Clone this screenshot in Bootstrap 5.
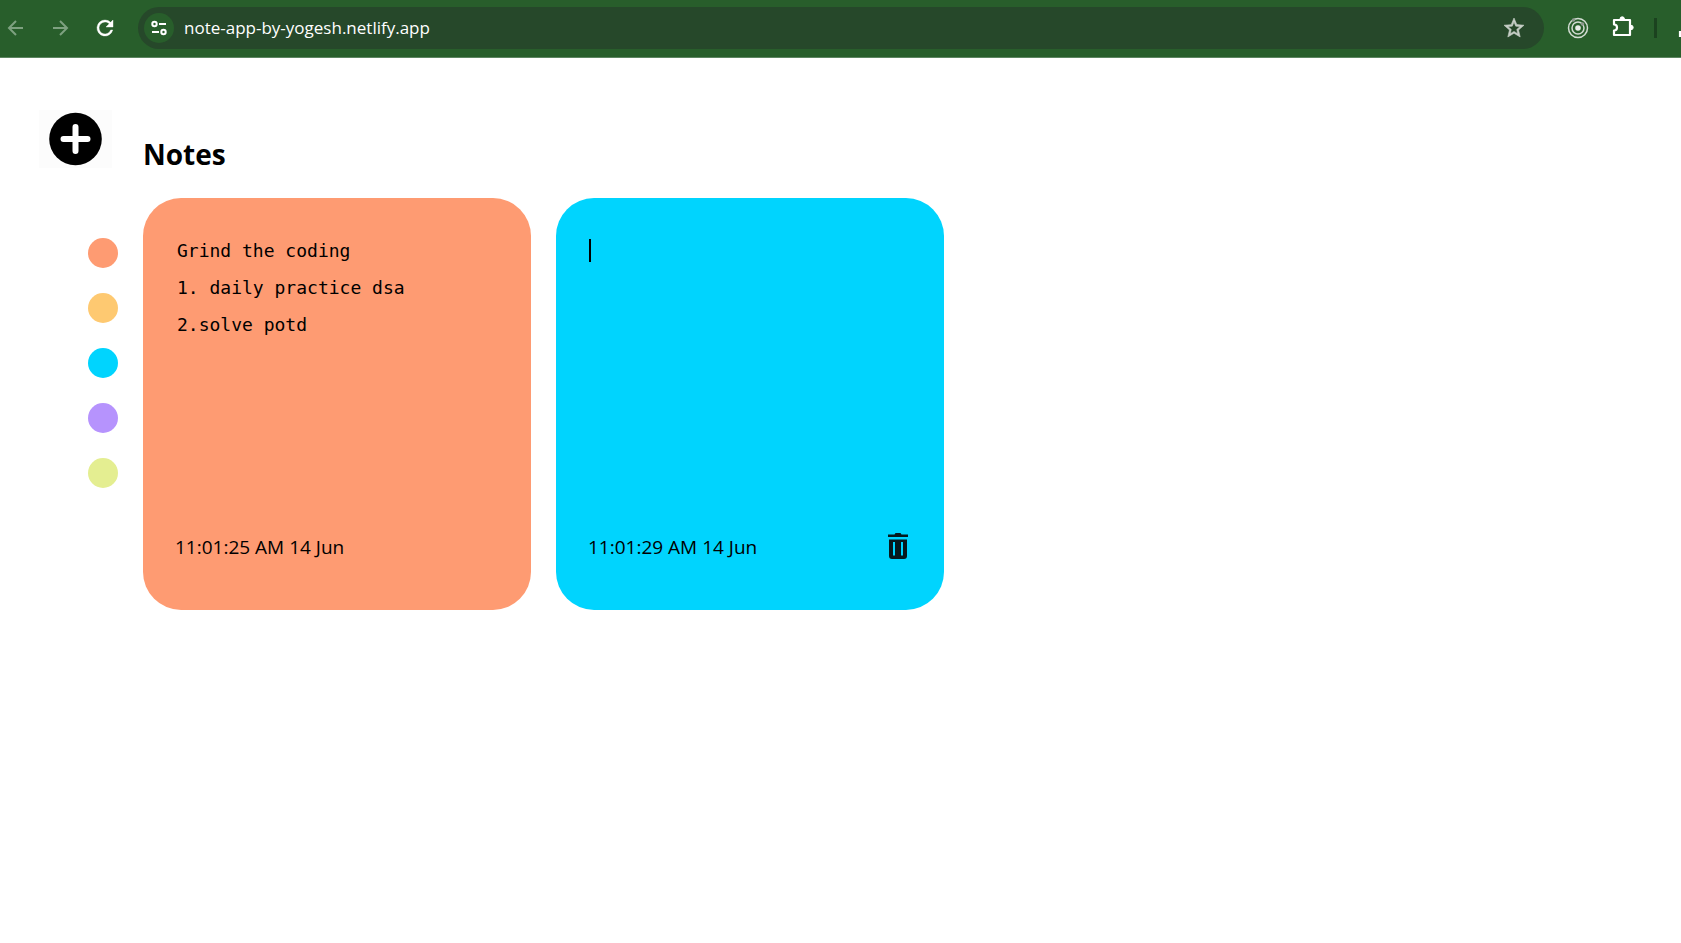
<!DOCTYPE html>
<html lang="en">
<head>
<meta charset="utf-8">
<meta name="viewport" content="width=device-width, initial-scale=1">
<title>Notes</title>
<link href="https://cdn.jsdelivr.net/npm/bootstrap@5.3.0/dist/css/bootstrap.min.css" rel="stylesheet">
<style>
  body { font-family: "Open Sans", "Noto Sans", sans-serif; color: #000; overflow-x: hidden; }
  svg { display: block; flex: none; }

  /* Browser toolbar */
  .toolbar { height: 58px; padding-bottom: 1px; background: #285e2b; border-bottom: 1px solid #5c8560; overflow: hidden; }
  .tool-btn { padding: 0; border: 0; background: none; color: #fff; flex: none; }
  .tool-btn:disabled { color: #7ea180; }
  .nav-tools { gap: 21px; padding-left: 3px; width: 138px; flex: none; }
  .address { height: 42px; background: #26482a; border-radius: 21px; padding-left: 6px; padding-right: 18px; }
  .site-info { width: 30px; height: 30px; background: #285e2b; }
  .url { font-size: 17px; line-height: 24px; color: #fff; background: none; border: 0; outline: 0; padding: 0; margin-left: 10px; min-width: 0; }
  .right-tools { padding-left: 22px; width: 137px; gap: 20px; flex: none; }
  .divider { width: 3px; height: 20px; background: #1b421f; flex: none; }

  /* Notes page */
  .rail { width: 118px; flex: none; padding-top: 52px; }
  .add-btn { width: 73px; height: 58px; border: 0; padding: 0; background: #fcfcfc; margin-right: 6px; }
  .swatches { gap: 25px; margin-top: 70px; }
  .swatch { width: 30px; height: 30px; border: 0; border-radius: 50%; padding: 0; }
  .board { padding: 76px 24px 48px 25px; }
  .board-title { font-size: 28px; line-height: 40px; margin-bottom: 24px; font-weight: 700; }
  .note-grid { gap: 25px; }
  .note { width: 388px; height: 412px; border-radius: 38px; padding: 32px 32px 44px; position: relative; }
  .note-text { border: 0; outline: 0; resize: none; background: none; padding: 2px; font-family: "DejaVu Sans Mono", monospace; font-size: 18px; line-height: 37px; color: #000; caret-color: transparent; overflow: hidden; }
  .note-date { font-size: 19px; line-height: 38px; }
  .caret { position: absolute; left: 33px; top: 41px; width: 2px; height: 23px; background: #000; }
  .trash { border: 0; background: none; padding: 0; margin-right: 4px; }
  .orange { background: #fe9b72; }
  .yellow { background: #fec971; }
  .cyan { background: #00d4fe; }
  .purple { background: #b693fd; }
  .lime { background: #e4ee91; }
</style>
</head>
<body class="bg-white">
<header class="toolbar d-flex align-items-center">
  <div class="nav-tools d-flex align-items-center">
    <button class="tool-btn" disabled aria-label="Back"><svg width="24" height="24" viewBox="0 0 24 24" fill="none" stroke="currentColor" stroke-width="2"><path d="M20 12H6M13 5l-7 7 7 7"/></svg></button>
    <button class="tool-btn" disabled aria-label="Forward"><svg width="24" height="24" viewBox="0 0 24 24" fill="none" stroke="currentColor" stroke-width="2"><path d="M5 12h14M12 5l7 7-7 7"/></svg></button>
    <button class="tool-btn" aria-label="Reload"><svg width="24" height="24" viewBox="0 0 24 24" fill="currentColor" stroke="currentColor" stroke-width=".4"><path d="M17.65 6.35A7.96 7.96 0 0 0 12 4a8 8 0 1 0 7.73 10h-2.08A6 6 0 1 1 12 6c1.66 0 3.14.69 4.22 1.78L13 11h7V4z"/></svg></button>
  </div>
  <div class="address d-flex align-items-center flex-grow-1">
    <button class="tool-btn site-info rounded-circle d-flex align-items-center justify-content-center" aria-label="Site information"><svg width="18" height="18" viewBox="0 0 18 18" fill="none" stroke="currentColor" stroke-width="2"><circle cx="4.500" cy="5" r="2.200"/><path d="M9 5h7M2 13h7"/><circle cx="13.500" cy="13" r="2.200"/></svg></button>
    <input class="url flex-grow-1" type="text" aria-label="Address" value="note-app-by-yogesh.netlify.app">
    <button class="tool-btn" aria-label="Bookmark"><svg width="24" height="24" viewBox="0 0 24 24" fill="#c6cec6" stroke="#c6cec6" stroke-width=".6"><path d="M22 9.240l-7.190-.620L12 2 9.190 8.630 2 9.240l5.460 4.730L5.820 21 12 17.270 18.180 21l-1.630-7.030zM12 15.400l-3.760 2.270 1-4.280-3.320-2.880 4.380-.380L12 6.100l1.710 4.040 4.380.380-3.320 2.880 1 4.280z"/></svg></button>
  </div>
  <div class="right-tools d-flex align-items-center">
    <button class="tool-btn" aria-label="Extension"><svg width="24" height="24" viewBox="0 0 24 24" fill="none" stroke="#d2dcd2" stroke-width="1.500"><circle cx="12" cy="12" r="9.500"/><circle cx="12" cy="12" r="6"/><circle cx="12" cy="12" r="2.800" fill="#e8ece8" stroke="none"/><circle cx="7.500" cy="4" r="1.800" fill="#8f9990" stroke="none"/><circle cx="16.500" cy="8" r="1.800" fill="#8f9990" stroke="none"/></svg></button>
    <button class="tool-btn" aria-label="Extensions"><svg width="24" height="24" viewBox="-1 1 24 24" fill="none" stroke="#fff" stroke-width="2.200" stroke-linejoin="round"><path d="M3 5h16v15H3v-4.500c4 0 4-6 0-6z"/><path d="M9 4a2.200 2.200 0 0 1 4.400 0zM20 10.300a2.200 2.200 0 0 1 0 4.400z" fill="#fff" stroke-width="1"/></svg></button>
    <span class="divider"></span>
    <button class="tool-btn" aria-label="Downloads"><svg width="24" height="24" viewBox="0 0 24 24" fill="none" stroke="#fff" stroke-width="2.200"><path d="M3 15v5h18v-5M12 4v11M7 10l5 5 5-5"/></svg></button>
  </div>
</header>

<main class="d-flex">
  <aside class="rail d-flex flex-column align-items-end">
    <button class="add-btn d-flex align-items-center justify-content-center" aria-label="Add note"><svg width="54" height="54" viewBox="0 0 54 54"><circle cx="26.500" cy="27" r="26.300"/><path d="M26.500 15v24M14.500 27h24" stroke="#fff" stroke-width="6" stroke-linecap="round"/></svg></button>
    <div class="swatches d-flex flex-column">
      <button class="swatch orange" aria-label="Orange note"></button>
      <button class="swatch yellow" aria-label="Yellow note"></button>
      <button class="swatch cyan" aria-label="Blue note"></button>
      <button class="swatch purple" aria-label="Purple note"></button>
      <button class="swatch lime" aria-label="Green note"></button>
    </div>
  </aside>
  <section class="board flex-grow-1">
    <h1 class="board-title">Notes</h1>
    <div class="note-grid d-flex flex-wrap">
      <article class="note orange d-flex flex-column">
        <textarea class="note-text w-100 flex-grow-1" aria-label="Note 1" spellcheck="false">Grind the coding
1. daily practice dsa
2.solve potd</textarea>
        <div class="d-flex align-items-center"><span class="note-date">11:01:25 AM 14 Jun</span></div>
      </article>
      <article class="note cyan d-flex flex-column">
        <textarea class="note-text w-100 flex-grow-1" aria-label="Note 2" spellcheck="false"></textarea>
        <span class="caret"></span>
        <div class="d-flex align-items-center justify-content-between">
          <span class="note-date">11:01:29 AM 14 Jun</span>
          <button class="trash" aria-label="Delete note"><svg width="20" height="28" viewBox="0 0 20 28"><path fill="#06191d" fill-rule="evenodd" d="M0 1.500h6.500l1-1.500h5l1 1.500H20V4H0zM1 6.500h18V23q0 3-3 3H4q-3 0-3-3zM5 9v13.500h2V9zM13 9v13.500h2V9z"/></svg></button>
        </div>
      </article>
    </div>
  </section>
</main>
<script src="https://cdn.jsdelivr.net/npm/bootstrap@5.3.0/dist/js/bootstrap.bundle.min.js"></script>
</body>
</html>
